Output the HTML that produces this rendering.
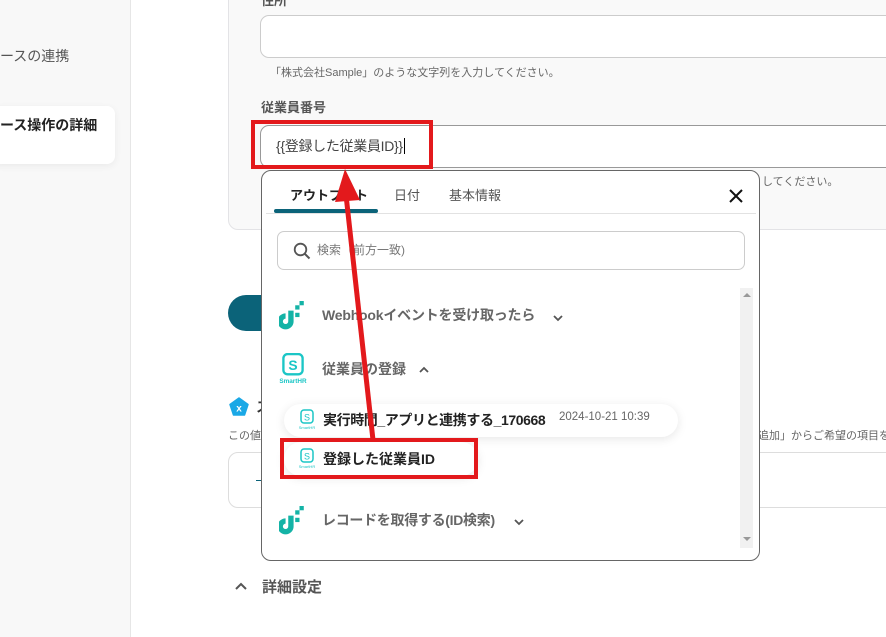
<!DOCTYPE html>
<html><head><meta charset="utf-8"><style>
*{box-sizing:border-box;margin:0;padding:0}
body{width:886px;height:637px;overflow:hidden;position:relative;background:#fff;font-family:"Liberation Sans","Noto Sans CJK JP",sans-serif;color:#333}
.a{position:absolute}
.t{white-space:nowrap}
</style></head><body>
<div class="a" style="left:0;top:0;width:131px;height:637px;background:#f8f8f8;border-right:1px solid #e6e6e6"></div>
<div class="a t" style="left:0;top:46px;font-size:14px;color:#555">ースの連携</div>
<div class="a" style="left:-10px;top:106px;width:125px;height:58px;background:#fff;border-radius:8px;box-shadow:0 2px 8px rgba(0,0,0,.06)"></div>
<div class="a t" style="left:0;top:115px;font-size:14px;font-weight:bold;color:#222">ース操作の詳細</div>
<div class="a" style="left:228px;top:-10px;width:680px;height:240px;background:#f9f9f9;border:1px solid #e3e3e6;border-radius:10px"></div>
<div class="a t" style="left:261px;top:-10px;font-size:13px;color:#555;font-weight:bold">住所</div>
<div class="a" style="left:260px;top:15px;width:640px;height:43px;background:#fff;border:1px solid #ccc;border-radius:9px"></div>
<div class="a t" style="left:270px;top:64px;font-size:11px;color:#666">「株式会社Sample」のような文字列を入力してください。</div>
<div class="a t" style="left:261px;top:97px;font-size:13px;color:#555;font-weight:bold">従業員番号</div>
<div class="a" style="left:260px;top:125px;width:640px;height:43px;background:#fff;border:1px solid #999;border-radius:9px"></div>
<div class="a t" style="left:276px;top:136px;font-size:14px;color:#444;letter-spacing:-0.3px">{{登録した従業員ID}}<span style="border-left:1px solid #000;margin-left:1px"></span></div>
<div class="a t" style="left:762px;top:173px;font-size:11px;color:#666">してください。</div>
<div class="a" style="left:228px;top:295px;width:80px;height:36px;background:#0b6379;border-radius:18px"></div>
<svg class="a" style="left:229px;top:397px" width="20" height="20" viewBox="0 0 20 20"><path d="M10 1 L19 7.5 L15.5 18 L4.5 18 L1 7.5Z" fill="#1aa8e6" stroke="#1aa8e6" stroke-width="1.5" stroke-linejoin="round"/><text x="10" y="14.5" font-size="10" fill="#fff" text-anchor="middle" font-weight="bold" font-family="Liberation Sans">x</text></svg>
<div class="a t" style="left:256px;top:397px;font-size:14px;font-weight:bold">ス</div>
<div class="a t" style="left:228px;top:427px;font-size:11px;color:#666">この値</div>
<div class="a t" style="left:758px;top:427px;font-size:11px;color:#666">追加」からご希望の項目を</div>
<div class="a" style="left:228px;top:452px;width:680px;height:56px;border:1px solid #ddd;border-radius:10px;background:#fff"></div>
<div class="a" style="left:256px;top:480px;width:8px;height:1px;background:#0b6379"></div>
<svg class="a" style="left:234px;top:581px" width="14" height="10"><path d="M2 8 L7 3 L12 8" fill="none" stroke="#555" stroke-width="2"/></svg>
<div class="a t" style="left:262px;top:576px;font-size:15px;font-weight:bold;color:#555">詳細設定</div>

<div class="a" style="left:261px;top:170px;width:499px;height:391px;background:#fff;border:1px solid #666;border-radius:10px;overflow:hidden">
  <div class="a t" style="left:28px;top:14px;font-size:13px;font-weight:bold;color:#222">アウトプット</div>
  <div class="a t" style="left:132px;top:14px;font-size:13px;color:#555">日付</div>
  <div class="a t" style="left:187px;top:14px;font-size:13px;color:#555">基本情報</div>
  <div class="a" style="left:12px;top:38px;width:104px;height:4px;background:#0b6379;border-radius:2px"></div>
  <div class="a" style="left:4px;top:42px;width:490px;height:1px;background:#e2e2e2"></div>
  <svg class="a" style="left:466px;top:17px" width="16" height="16"><path d="M2 2L14 14M14 2L2 14" stroke="#111" stroke-width="2"/></svg>
  <div class="a" style="left:15px;top:60px;width:468px;height:39px;border:1px solid #ccc;border-radius:7px"></div>
  <svg class="a" style="left:31px;top:71px" width="18" height="18"><circle cx="7.5" cy="7.5" r="5.8" fill="none" stroke="#555" stroke-width="1.8"/><path d="M12 12L16.5 16.5" stroke="#555" stroke-width="2"/></svg>
  <div class="a t" style="left:55px;top:70px;font-size:12px;color:#777">検索（前方一致)</div>
  <div class="a" style="left:478px;top:117px;width:13px;height:260px;background:#f1f1f1"></div>
  <div class="a" style="left:481px;top:122px;width:0;height:0;border-left:4px solid transparent;border-right:4px solid transparent;border-bottom:4px solid #999"></div>
  <div class="a" style="left:481px;top:366px;width:0;height:0;border-left:4px solid transparent;border-right:4px solid transparent;border-top:4px solid #999"></div>
  <svg class="a" style="left:17px;top:130px" width="26" height="30" viewBox="0 0 24 28"><path d="M11 9 L11 19 A5 5 0 1 1 6 14" fill="none" stroke="#14b3a6" stroke-width="5"/><rect x="15" y="4" width="4" height="4" fill="#14b3a6"/><rect x="19" y="0" width="4" height="4" fill="#14b3a6"/><rect x="15" y="11" width="4" height="4" fill="#14b3a6"/></svg>
  <div class="a t" style="left:60px;top:134px;font-size:14px;font-weight:bold;color:#666;letter-spacing:-0.2px">Webhookイベントを受け取ったら</div>
  <svg class="a" style="left:290px;top:142px" width="12" height="10"><path d="M2 3L6 7L10 3" fill="none" stroke="#555" stroke-width="1.8"/></svg>
  <svg class="a" style="left:15px;top:182px" width="32" height="32" viewBox="0 0 30 30"><rect x="6" y="1" width="18" height="19" rx="4" fill="none" stroke="#1bc6c6" stroke-width="2.2"/><text x="15" y="16" font-size="13" font-weight="bold" fill="#1bc6c6" text-anchor="middle" font-family="Liberation Sans">S</text><text x="15" y="28" font-size="6" font-weight="bold" fill="#1bc6c6" text-anchor="middle" font-family="Liberation Sans">SmartHR</text></svg>
  <div class="a t" style="left:60px;top:188px;font-size:14px;font-weight:bold;color:#666">従業員の登録</div>
  <svg class="a" style="left:156px;top:194px" width="12" height="10"><path d="M2 7L6 3L10 7" fill="none" stroke="#555" stroke-width="1.8"/></svg>
  <div class="a" style="left:22px;top:233px;width:394px;height:33px;background:#fff;border-radius:17px;box-shadow:0 2px 10px rgba(0,0,0,.1)"></div>
  <svg class="a" style="left:35px;top:237px" width="20" height="24" viewBox="0 0 20 24"><rect x="4" y="2" width="12" height="13" rx="3" fill="none" stroke="#1bc6c6" stroke-width="1.5"/><text x="10" y="12.5" font-size="9" fill="#1bc6c6" text-anchor="middle" font-family="Liberation Sans">S</text><text x="10" y="21" font-size="4" fill="#1bc6c6" text-anchor="middle">SmartHR</text></svg>
  <div class="a t" style="left:61px;top:239px;font-size:14px;font-weight:bold;color:#222;letter-spacing:-0.4px">実行時間_アプリと連携する_170668</div>
  <div class="a t" style="left:297px;top:240px;font-size:11.5px;color:#666">2024-10-21 10:39</div>
  <div class="a" style="left:22px;top:271px;width:194px;height:34px;background:#fff;border-radius:17px;box-shadow:0 2px 10px rgba(0,0,0,.1)"></div>
  <svg class="a" style="left:35px;top:276px" width="20" height="24" viewBox="0 0 20 24"><rect x="4" y="2" width="12" height="13" rx="3" fill="none" stroke="#1bc6c6" stroke-width="1.5"/><text x="10" y="12.5" font-size="9" fill="#1bc6c6" text-anchor="middle" font-family="Liberation Sans">S</text><text x="10" y="21" font-size="4" fill="#1bc6c6" text-anchor="middle">SmartHR</text></svg>
  <div class="a t" style="left:61px;top:278px;font-size:14px;font-weight:bold;color:#222">登録した従業員ID</div>
  <svg class="a" style="left:17px;top:335px" width="26" height="30" viewBox="0 0 24 28"><path d="M11 9 L11 19 A5 5 0 1 1 6 14" fill="none" stroke="#14b3a6" stroke-width="5"/><rect x="15" y="4" width="4" height="4" fill="#14b3a6"/><rect x="19" y="0" width="4" height="4" fill="#14b3a6"/><rect x="15" y="11" width="4" height="4" fill="#14b3a6"/></svg>
  <div class="a t" style="left:60px;top:339px;font-size:14px;font-weight:bold;color:#666;letter-spacing:-0.3px">レコードを取得する(ID検索)</div>
  <svg class="a" style="left:251px;top:346px" width="12" height="10"><path d="M2 3L6 7L10 3" fill="none" stroke="#555" stroke-width="1.8"/></svg>
</div>

<div class="a" style="left:251px;top:120px;width:182px;height:49px;border:4px solid #e3191c"></div>
<div class="a" style="left:280px;top:438px;width:198px;height:41px;border:4px solid #e3191c"></div>
<svg class="a" style="left:0;top:0" width="886" height="637"><line x1="373" y1="440" x2="346" y2="195" stroke="#e3191c" stroke-width="5"/><path d="M335 202 L345 169 L360 200Z" fill="#e3191c"/></svg>
</body></html>
